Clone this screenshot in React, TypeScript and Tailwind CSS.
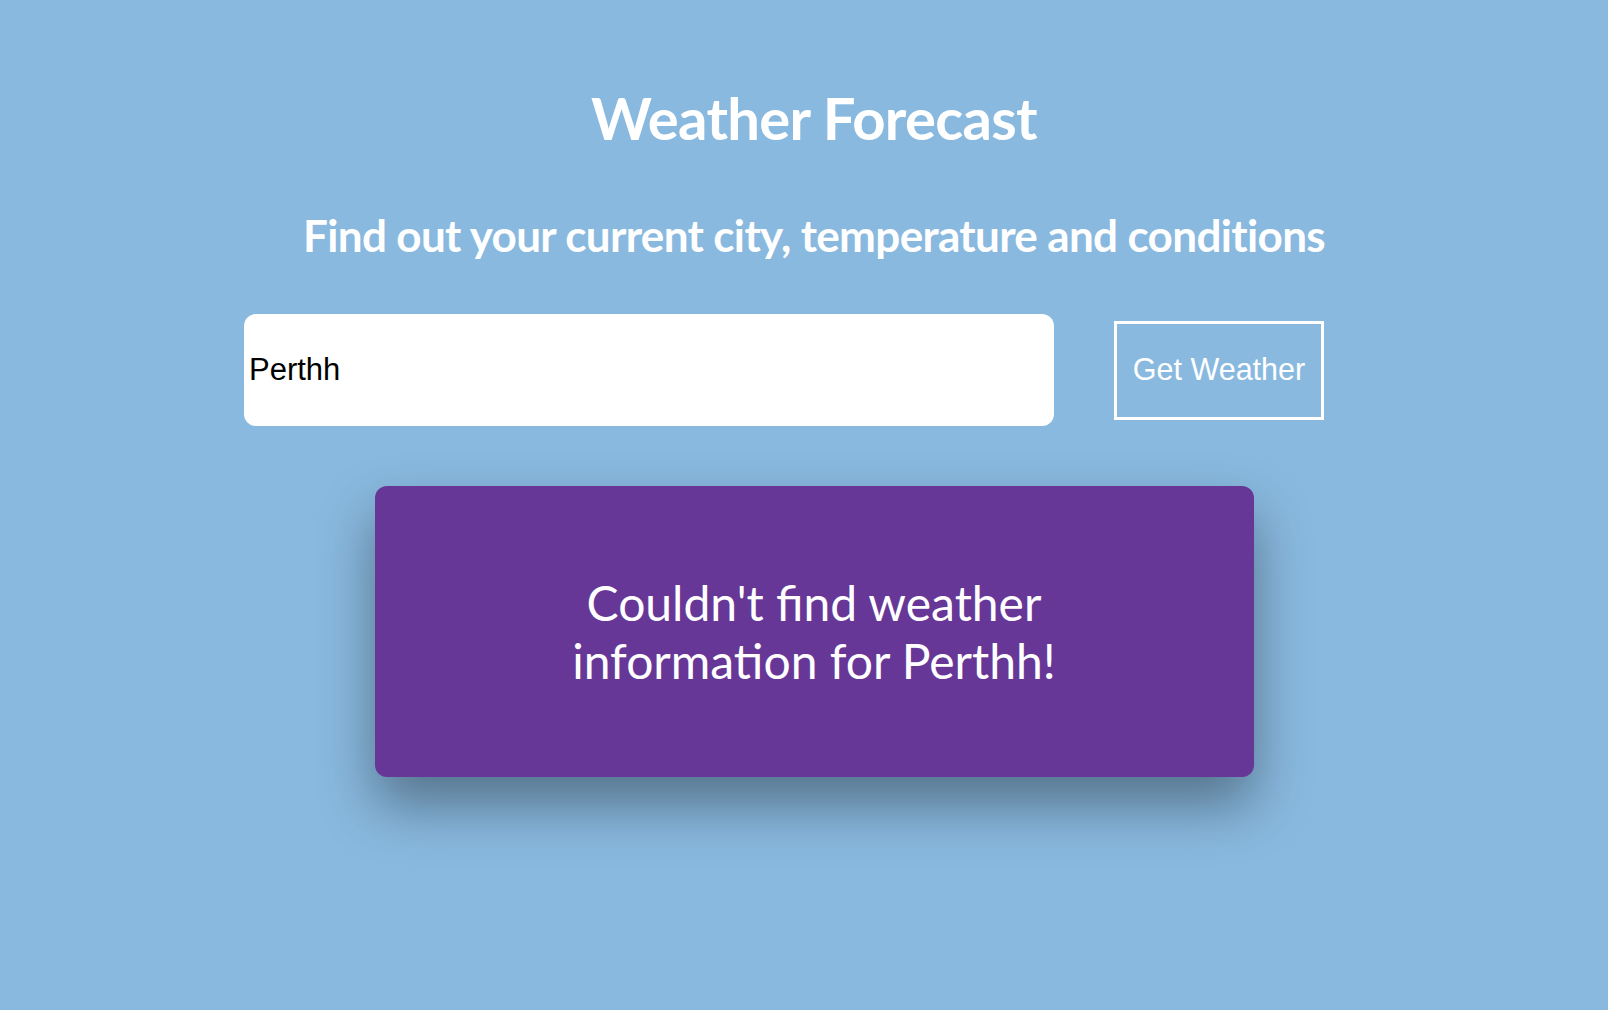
export default function App() {
  return (
    <div className="min-h-[1010px] w-full bg-[#89b9df] pl-[20px] flex flex-col items-center font-['Lato',sans-serif] text-white">
      {/* headings */}
      <h1 className="mt-[89px] text-[58px] leading-none font-bold tracking-[-0.7px]">
        Weather Forecast
      </h1>
      <h2 className="mt-[66px] text-[44px] leading-none font-bold tracking-[-0.65px]">
        Find out your current city, temperature and conditions
      </h2>

      {/* search row */}
      <form
        className="mt-[57px] mr-[60px] flex w-[1080px] items-center gap-[60px]"
        onSubmit={(e) => e.preventDefault()}
      >
        <input
          type="text"
          defaultValue="Perthh"
          className="h-[112px] w-[810px] rounded-[12px] bg-white pl-[5px] font-['Liberation_Sans',Arial,sans-serif] text-[31px] text-black outline-none"
        />
        <button
          type="submit"
          className="h-[99px] w-[210px] border-[3px] border-white font-['Liberation_Sans',Arial,sans-serif] text-[30.5px] text-white"
        >
          Get Weather
        </button>
      </form>

      {/* result card */}
      <div className="mt-[60px] flex h-[291px] w-[879px] items-center justify-center rounded-[12px] bg-[#673798] shadow-[0_28px_55px_rgba(0,0,0,0.38)]">
        <p className="w-[500px] text-center text-[48px] leading-[1.2]">
          Couldn't find weather information for Perthh!
        </p>
      </div>
    </div>
  );
}
